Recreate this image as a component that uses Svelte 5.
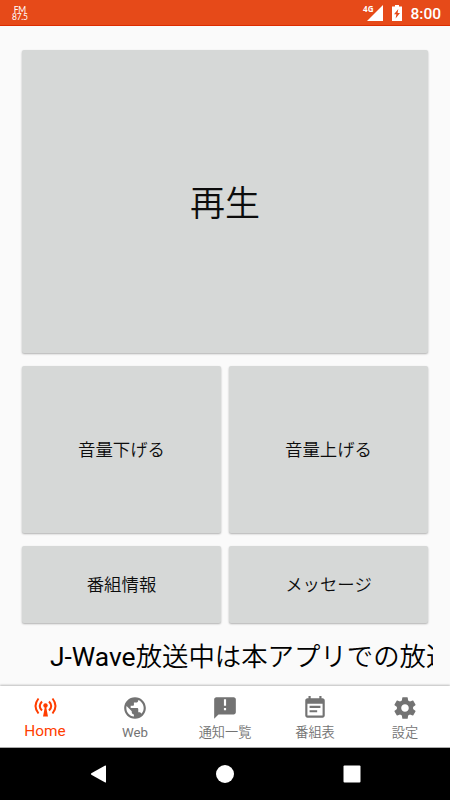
<script>
	let current = 'home';

	const controls = [
		{ id: 'down', label: '音量下げる' },
		{ id: 'up', label: '音量上げる' },
		{ id: 'info', label: '番組情報' },
		{ id: 'message', label: 'メッセージ' }
	];

	const tabs = [
		{ id: 'home', label: 'Home' },
		{
			id: 'web',
			label: 'Web',
			icon: 'M12 2C6.48 2 2 6.48 2 12s4.48 10 10 10 10-4.48 10-10S17.52 2 12 2zm-1 17.93c-3.95-.49-7-3.85-7-7.93 0-.62.08-1.21.21-1.79L9 15v1c0 1.1.9 2 2 2v1.93zm6.9-2.54c-.26-.81-1-1.39-1.9-1.39h-1v-3c0-.55-.45-1-1-1H8v-2h2c.55 0 1-.45 1-1V7h2c1.1 0 2-.9 2-2v-.41c2.93 1.19 5 4.06 5 7.41 0 2.08-.8 3.97-2.1 5.39z'
		},
		{
			id: 'news',
			label: '通知一覧',
			icon: 'M20 2H4c-1.1 0-1.99.9-1.99 2L2 22l4-4h14c1.1 0 2-.9 2-2V4c0-1.1-.9-2-2-2zm-7 12h-2v-2h2v2zm0-4h-2V4h2v6z'
		},
		{
			id: 'schedule',
			label: '番組表',
			icon: 'M17 10H7v2h10v-2zm2-7h-1V1h-2v2H8V1H6v2H5c-1.11 0-1.99.9-1.99 2L3 19c0 1.1.89 2 2 2h14c1.1 0 2-.9 2-2V5c0-1.1-.9-2-2-2zm0 16H5V8h14v11zm-5-5H7v2h7v-2z'
		},
		{
			id: 'settings',
			label: '設定',
			icon: 'M19.43 12.98c.04-.32.07-.64.07-.98s-.03-.66-.07-.98l2.11-1.65c.19-.15.24-.42.12-.64l-2-3.46c-.12-.22-.39-.3-.61-.22l-2.49 1c-.52-.4-1.08-.73-1.69-.98l-.38-2.65C14.46 2.18 14.25 2 14 2h-4c-.25 0-.46.18-.49.42l-.38 2.65c-.61.25-1.17.59-1.69.98l-2.49-1c-.23-.09-.49 0-.61.22l-2 3.46c-.13.22-.07.49.12.64l2.11 1.65c-.04.32-.07.65-.07.98s.03.66.07.98l-2.11 1.65c-.19.15-.24.42-.12.64l2 3.46c.12.22.39.3.61.22l2.49-1c.52.4 1.08.73 1.69.98l.38 2.65c.03.24.24.42.49.42h4c.25 0 .46-.18.49-.42l.38-2.65c.61-.25 1.17-.59 1.69-.98l2.49 1c.23.09.49 0 .61-.22l2-3.46c.12-.22.07-.49-.12-.64l-2.11-1.65zM12 15.5c-1.93 0-3.5-1.57-3.5-3.5s1.57-3.5 3.5-3.5 3.5 1.57 3.5 3.5-1.57 3.5-3.5 3.5z'
		}
	];
</script>

<div class="screen">
	<header>
		<div class="station"><span>FM</span><span>87.5</span></div>
		<div class="status">
			<span class="network">4G</span>
			<svg class="signal" viewBox="0 0 16 16"><path d="M16 0v16H0z" /></svg>
			<svg class="battery" viewBox="0 0 10 16">
				<path
					fill-rule="evenodd"
					d="M3 0h4v1.500h3V16H0V1.500h3zM6.300 4L2 9.300h2.400L3.600 13.500 8 8H5.600z"
				/>
			</svg>
			<span class="clock">8:00</span>
		</div>
	</header>

	<main>
		<button class="play">再生</button>
		{#each controls as control}
			<button>{control.label}</button>
		{/each}
	</main>

	<div class="ticker"><span class="latin">J-Wave</span>放送中は本アプリでの放送</div>

	<nav>
		{#each tabs as tab}
			<button class:active={current === tab.id} on:click={() => (current = tab.id)}>
				{#if tab.icon}
					<svg viewBox="0 0 24 24"><path d={tab.icon} /></svg>
				{:else}
					<svg viewBox="0 0 26 26">
						<g class="waves">
							<path d="M6.500 4.500Q.5 12 6.500 19.500M20.500 4.500Q26.500 12 20.500 19.500" />
							<path d="M10 7.500Q5.500 12 10 16.500M17 7.500Q21.500 12 17 16.500" />
						</g>
						<circle cx="13.500" cy="11.500" r="2.200" />
						<path d="M12.800 13h1.400l1.800 9.500h-5z" />
					</svg>
				{/if}
				<span class:latin={tab.id === 'home' || tab.id === 'web'}>{tab.label}</span>
			</button>
		{/each}
	</nav>

	<footer>
		<svg viewBox="0 0 18 18"><path d="M1.300 8.300L15.200.5q.8-.3.800.5v16q0 .8-.8.500L1.300 9.700q-.8-.7 0-1.400z" /></svg>
		<svg viewBox="0 0 18 18"><circle cx="9" cy="9" r="9" /></svg>
		<svg viewBox="0 0 18 18"><rect x=".5" y=".5" width="17" height="17" rx="1" /></svg>
	</footer>
</div>

<style>
	:global(body) {
		background: #fafafa;
	}
	.screen {
		display: flex;
		flex-direction: column;
		height: 800px;
		width: 450px;
		overflow: hidden;
		font-family: Roboto, 'Noto Sans CJK JP', sans-serif;
		font-weight: 350;
		background: #fafafa;
	}
	.latin {
		font-weight: 400;
	}
	header {
		box-sizing: border-box;
		height: 26px;
		flex: none;
		display: flex;
		justify-content: space-between;
		background: #e64a19;
		border-bottom: 1px solid #dd2c00;
		color: #fff;
		padding: 0 9px 0 12px;
	}
	.station {
		display: flex;
		flex-direction: column;
		align-items: center;
		padding-top: 7px;
		font: 400 8.500px/7px Lato, sans-serif;
		letter-spacing: -0.3px;
	}
	.status {
		display: flex;
		align-items: flex-start;
	}
	.status svg {
		fill: #fff;
	}
	.network {
		font-family: 'Open Sans', sans-serif;
		font-size: 8px;
		font-weight: 700;
		line-height: 8px;
		padding-top: 5px;
		margin-right: -6px;
	}
	.signal {
		width: 16px;
		height: 16px;
		margin-top: 5px;
	}
	.battery {
		width: 10px;
		height: 16px;
		margin: 5px 8px 0 9px;
	}
	.clock {
		font-size: 15.5px;
		font-weight: 500;
		line-height: 28px;
	}
	button {
		border: 0;
		margin: 0;
		padding: 0;
		font-family: inherit;
		font-weight: inherit;
	}
	main {
		flex: none;
		display: grid;
		grid-template-columns: 1fr 1fr;
		grid-template-rows: 303px 167px 77px;
		gap: 13px 8px;
		padding: 24px 22px 0;
	}
	main button {
		background: #d6d8d7;
		border-radius: 2px;
		box-shadow: 0 1px 2px rgba(0, 0, 0, 0.3);
		color: #0c0c0c;
		font-size: 17.4px;
		padding-bottom: 2px;
	}
	main .play {
		grid-column: 1 / 3;
		font-size: 35px;
		padding-bottom: 3px;
	}
	.ticker {
		flex: 1;
		margin: 0 17px;
		padding: 14px 0 0 33px;
		overflow: hidden;
		white-space: nowrap;
		font-size: 26.4px;
		line-height: 40px;
		color: #000;
	}
	nav {
		box-sizing: border-box;
		height: 62px;
		flex: none;
		display: flex;
		background: #fff;
		border-bottom: 1px solid #aaa;
		box-shadow: 0 -1px 2px rgba(0, 0, 0, 0.25);
	}
	nav button {
		flex: 1;
		display: flex;
		flex-direction: column;
		align-items: center;
		background: none;
		color: #737373;
		font-size: 13.2px;
		padding-top: 9px;
	}
	nav svg {
		width: 26px;
		height: 26px;
		fill: currentColor;
	}
	nav span {
		line-height: 20px;
		margin-top: 2px;
	}
	nav .active {
		color: #ff3d00;
		font-size: 15.4px;
		padding-top: 8px;
	}
	nav .active span {
		margin-top: 1px;
	}
	.waves {
		fill: none;
		stroke: currentColor;
		stroke-width: 2;
	}
	footer {
		height: 52px;
		flex: none;
		display: flex;
		align-items: center;
		justify-content: space-between;
		background: #000;
		padding: 0 89.500px;
		box-sizing: border-box;
	}
	footer svg {
		width: 18px;
		height: 18px;
		fill: #fff;
	}
</style>
